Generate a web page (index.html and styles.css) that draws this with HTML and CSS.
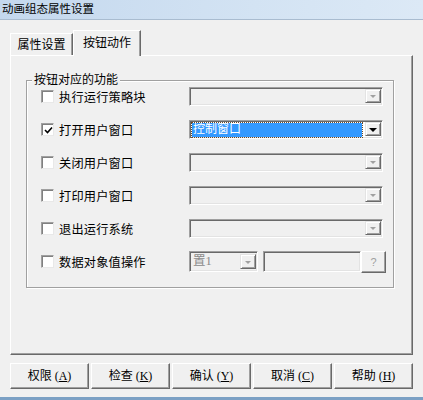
FILE: index.html
```html
<!DOCTYPE html>
<html lang="zh-CN">
<head>
<meta charset="utf-8">
<title>动画组态属性设置</title>
<link rel="stylesheet" href="styles.css">
</head>
<body>
<div class="window">
  <div class="titlebar">动画组态属性设置</div>
  <div class="main">
    <div class="tabs">
      <div class="tab">属性设置</div>
      <div class="tab active">按钮动作</div>
    </div>
    <div class="panel">
      <div class="group">
        <div class="legend">按钮对应的功能</div>
        <div class="rows">
          <div class="row">
            <span class="check"></span>
            <span class="label">执行运行策略块</span>
            <div class="combo"><span class="field"></span><span class="arrow"><i></i></span></div>
          </div>
          <div class="row">
            <span class="check"><svg width="9" height="9" viewBox="0 0 9 9"><polyline points="1,4 3.5,6.5 8,1.5" fill="none" stroke="#000" stroke-width="1.6"/></svg></span>
            <span class="label">打开用户窗口</span>
            <div class="combo focus"><span class="field">控制窗口</span><span class="arrow"><i></i></span></div>
          </div>
          <div class="row">
            <span class="check"></span>
            <span class="label">关闭用户窗口</span>
            <div class="combo"><span class="field"></span><span class="arrow"><i></i></span></div>
          </div>
          <div class="row">
            <span class="check"></span>
            <span class="label">打印用户窗口</span>
            <div class="combo"><span class="field"></span><span class="arrow"><i></i></span></div>
          </div>
          <div class="row">
            <span class="check"></span>
            <span class="label">退出运行系统</span>
            <div class="combo"><span class="field"></span><span class="arrow"><i></i></span></div>
          </div>
          <div class="row">
            <span class="check"></span>
            <span class="label">数据对象值操作</span>
            <div class="ops">
              <div class="combo small"><span class="field gray">置1</span><span class="arrow"><i></i></span></div>
              <div class="textbox"></div>
              <div class="qbtn">?</div>
            </div>
          </div>
        </div>
      </div>
    </div>
    <div class="buttons">
      <div class="btn">权限<span class="key">(<u>A</u>)</span></div>
      <div class="btn">检查<span class="key">(<u>K</u>)</span></div>
      <div class="btn">确认<span class="key">(<u>Y</u>)</span></div>
      <div class="btn">取消<span class="key">(<u>C</u>)</span></div>
      <div class="btn">帮助<span class="key">(<u>H</u>)</span></div>
    </div>
  </div>
  <div class="bottomline"></div>
</div>
</body>
</html>
```
FILE: styles.css
```css
html, body {
  margin: 0;
  padding: 0;
}
body {
  width: 423px;
  height: 400px;
  overflow: hidden;
  background: #f0f0f0;
  font-family: "Liberation Sans", "Noto Sans CJK SC", sans-serif;
  font-size: 12px;
  color: #000;
}
.window {
  width: 423px;
  height: 400px;
  display: flex;
  flex-direction: column;
}
.titlebar {
  height: 20px;
  box-sizing: border-box;
  line-height: 19px;
  padding-left: 2px;
  font-size: 11.5px;
  background: linear-gradient(to right, #c4d8ee 0%, #d3e3f3 60%, #dce9f6 100%);
  border-bottom: 1px solid #a9bcd0;
  white-space: nowrap;
}
.main {
  flex: 1;
  padding: 10px 0 0 10px;
}
.tabs {
  display: flex;
  align-items: flex-end;
  height: 25px;
}
.tab {
  box-sizing: border-box;
  height: 22px;
  width: 63px;
  border-top: 1px solid #fff;
  border-left: 1px solid #fff;
  border-right: 1px solid #696969;
  box-shadow: inset -1px 0 #a0a0a0;
  text-align: center;
  line-height: 22px;
}
.tab.active {
  position: relative;
  z-index: 1;
  height: 26px;
  width: 68px;
  margin-bottom: -1px;
  background: #f0f0f0;
  line-height: 25px;
}
.panel {
  box-sizing: border-box;
  width: 403px;
  height: 300px;
  border-top: 1px solid #fff;
  border-left: 1px solid #fff;
  border-right: 1px solid #696969;
  border-bottom: 1px solid #696969;
  box-shadow: inset -1px -1px #a0a0a0;
  padding: 24px 0 0 15px;
}
.group {
  box-sizing: border-box;
  width: 368px;
  height: 208px;
  border: 1px solid #a0a0a0;
  box-shadow: inset 1px 1px #fff, 1px 1px #fff;
}
.legend {
  width: max-content;
  margin: -9px 0 0 5px;
  padding: 0 2px;
  line-height: 16px;
  background: #f0f0f0;
}
.rows {
  margin-top: -8px;
  padding-left: 14px;
}
.row {
  display: flex;
  align-items: center;
  height: 33px;
}
.check {
  box-sizing: border-box;
  width: 13px;
  height: 13px;
  background: #fff;
  border: 1px solid;
  border-color: #a0a0a0 #e8e8e8 #e8e8e8 #a0a0a0;
  box-shadow: inset 1px 1px #808080;
  display: flex;
  align-items: center;
  justify-content: center;
  padding: 1px 0 0 1px;
}
.check svg {
  display: block;
}
.label {
  margin-left: 5px;
  width: 130px;
  font-size: 12.2px;
  letter-spacing: 0.2px;
}
.combo {
  box-sizing: border-box;
  display: flex;
  width: 194px;
  height: 19px;
  border: 1px solid;
  border-color: #a0a0a0 #fff #fff #a0a0a0;
  box-shadow: inset 1px 1px #696969, inset -1px -1px #e3e3e3;
  padding: 2px 1px 1px 2px;
  background: #f0f0f0;
}
.combo .field {
  flex: 1;
  line-height: 13px;
  padding-left: 1px;
  white-space: nowrap;
}
.combo.focus {
  background: #fff;
}
.combo.focus .field {
  background: #3399ff;
  color: #fff;
  outline: 1px dotted #6a4a2a;
  margin-right: 3px;
}
.arrow {
  box-sizing: border-box;
  width: 16px;
  height: 14px;
  margin-top: -1px;
  border: 1px solid;
  border-color: #e3e3e3 #696969 #696969 #e3e3e3;
  box-shadow: inset 1px 1px #fff, inset -1px -1px #a0a0a0;
  background: #f0f0f0;
  display: flex;
  align-items: center;
  justify-content: center;
}
.arrow i {
  display: block;
  width: 0;
  height: 0;
  border-left: 3px solid transparent;
  border-right: 3px solid transparent;
  border-top: 3px solid #a0a0a0;
  margin-top: 1px;
}
.combo.focus .arrow i {
  border-top-color: #000;
  border-left-width: 4px;
  border-right-width: 4px;
  border-top-width: 4px;
}
.ops {
  display: flex;
  align-items: center;
}
.combo.small {
  width: 69px;
  height: 21px;
  padding-top: 3px;
}
.combo.small .arrow {
  height: 15px;
}
.field.gray {
  color: #8a8a8a;
  font-family: "Liberation Serif", "Noto Sans CJK SC", serif;
  font-size: 12.5px;
}
.textbox {
  box-sizing: border-box;
  margin-left: 5px;
  width: 98px;
  height: 21px;
  border: 1px solid;
  border-color: #a0a0a0 #fff #fff #a0a0a0;
  box-shadow: inset 1px 1px #696969, inset -1px -1px #e3e3e3;
  background: #f0f0f0;
}
.qbtn {
  box-sizing: border-box;
  width: 25px;
  height: 22px;
  border: 1px solid;
  border-color: #fff #696969 #696969 #fff;
  box-shadow: inset -1px -1px #a0a0a0;
  color: #a0a0a0;
  text-align: center;
  line-height: 20px;
  font-size: 11px;
}
.buttons {
  display: flex;
  gap: 2px;
  margin-top: 8px;
}
.btn {
  box-sizing: border-box;
  width: 79px;
  height: 26px;
  border: 1px solid;
  border-color: #fff #696969 #696969 #fff;
  box-shadow: inset -1px -1px #a0a0a0;
  text-align: center;
  line-height: 24px;
  font-size: 12px;
}
.key {
  margin-left: 3px;
  font-family: "Liberation Serif", serif;
  font-size: 12px;
}
.btn u {
  text-underline-offset: 1px;
}
.bottomline {
  height: 3px;
  background: #7ba0c4;
}
```
